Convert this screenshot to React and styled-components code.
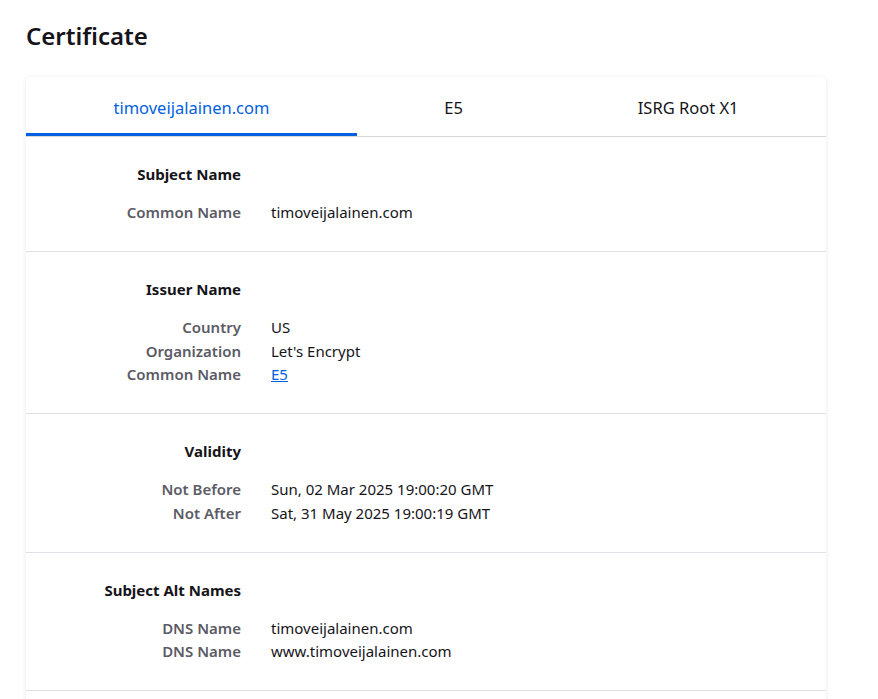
import { Fragment } from "react";
import styled, { createGlobalStyle } from "styled-components";

const GlobalStyle = createGlobalStyle`
  html, body {
    margin: 0;
    padding: 0;
    background: #ffffff;
  }
  body {
    font-family: "Noto Sans", "Open Sans", sans-serif;
    color: #15141a;
    font-size: 15px;
  }
`;

const Page = styled.div`
  padding: 18px 26px 40px 26px;
  width: 800px;
`;

const Title = styled.h1`
  margin: 0 0 23px 0;
  font-size: 24px;
  line-height: 36px;
  font-weight: 600;
  color: #15141a;
`;

const Card = styled.div`
  background: #ffffff;
  box-shadow: 0 1px 4px rgba(58, 57, 68, 0.12);
  border-radius: 4px;
`;

const TabBar = styled.div`
  display: flex;
  border-bottom: 1px solid #d7d7db;
`;

const Tab = styled.button`
  flex: 1 1 auto;
  height: 59px;
  padding: 4px 0 0 0;
  border: none;
  border-bottom: 3px solid ${(p) => (p.$active ? "#0061e0" : "transparent")};
  background: transparent;
  font-family: inherit;
  font-size: 16.5px;
  color: ${(p) => (p.$active ? "#0061e0" : "#15141a")};
  cursor: pointer;
`;

const Section = styled.div`
  display: grid;
  grid-template-columns: 215px 1fr;
  column-gap: 30px;
  padding: 25px 0 26.5px 0;
  border-bottom: 1px solid #e0e0e6;
`;

const SectionTitle = styled.div`
  grid-column: 1;
  text-align: right;
  font-weight: 700;
  line-height: 24px;
  margin-bottom: 15px;
`;

const Label = styled.div`
  grid-column: 1;
  text-align: right;
  font-weight: 600;
  color: #5b5b66;
  line-height: 23.5px;
`;

const Value = styled.div`
  grid-column: 2;
  line-height: 23.5px;
  color: #15141a;
`;

const Link = styled.a`
  color: #0061e0;
  text-decoration: underline;
`;

const sections = [
  {
    title: "Subject Name",
    rows: [["Common Name", "timoveijalainen.com"]],
  },
  {
    title: "Issuer Name",
    rows: [
      ["Country", "US"],
      ["Organization", "Let's Encrypt"],
      ["Common Name", "E5", true],
    ],
  },
  {
    title: "Validity",
    rows: [
      ["Not Before", "Sun, 02 Mar 2025 19:00:20 GMT"],
      ["Not After", "Sat, 31 May 2025 19:00:19 GMT"],
    ],
  },
  {
    title: "Subject Alt Names",
    rows: [
      ["DNS Name", "timoveijalainen.com"],
      ["DNS Name", "www.timoveijalainen.com"],
    ],
  },
  {
    title: "Public Key Info",
    rows: [
      ["Algorithm", "Elliptic Curve"],
      ["Key Size", "256"],
      ["Curve", "P-256"],
    ],
  },
];

const tabs = ["timoveijalainen.com", "E5", "ISRG Root X1"];

export default function App() {
  return (
    <Page>
      <GlobalStyle />
      <Title>Certificate</Title>
      <Card>
        <TabBar>
          {tabs.map((t, i) => (
            <Tab key={t} $active={i === 0}>
              {t}
            </Tab>
          ))}
        </TabBar>
        {sections.map((s) => (
          <Section key={s.title}>
            <SectionTitle>{s.title}</SectionTitle>
            {s.rows.map(([label, value, link], i) => (
              <Fragment key={i}>
                <Label>{label}</Label>
                <Value>{link ? <Link href="#">{value}</Link> : value}</Value>
              </Fragment>
            ))}
          </Section>
        ))}
      </Card>
    </Page>
  );
}
